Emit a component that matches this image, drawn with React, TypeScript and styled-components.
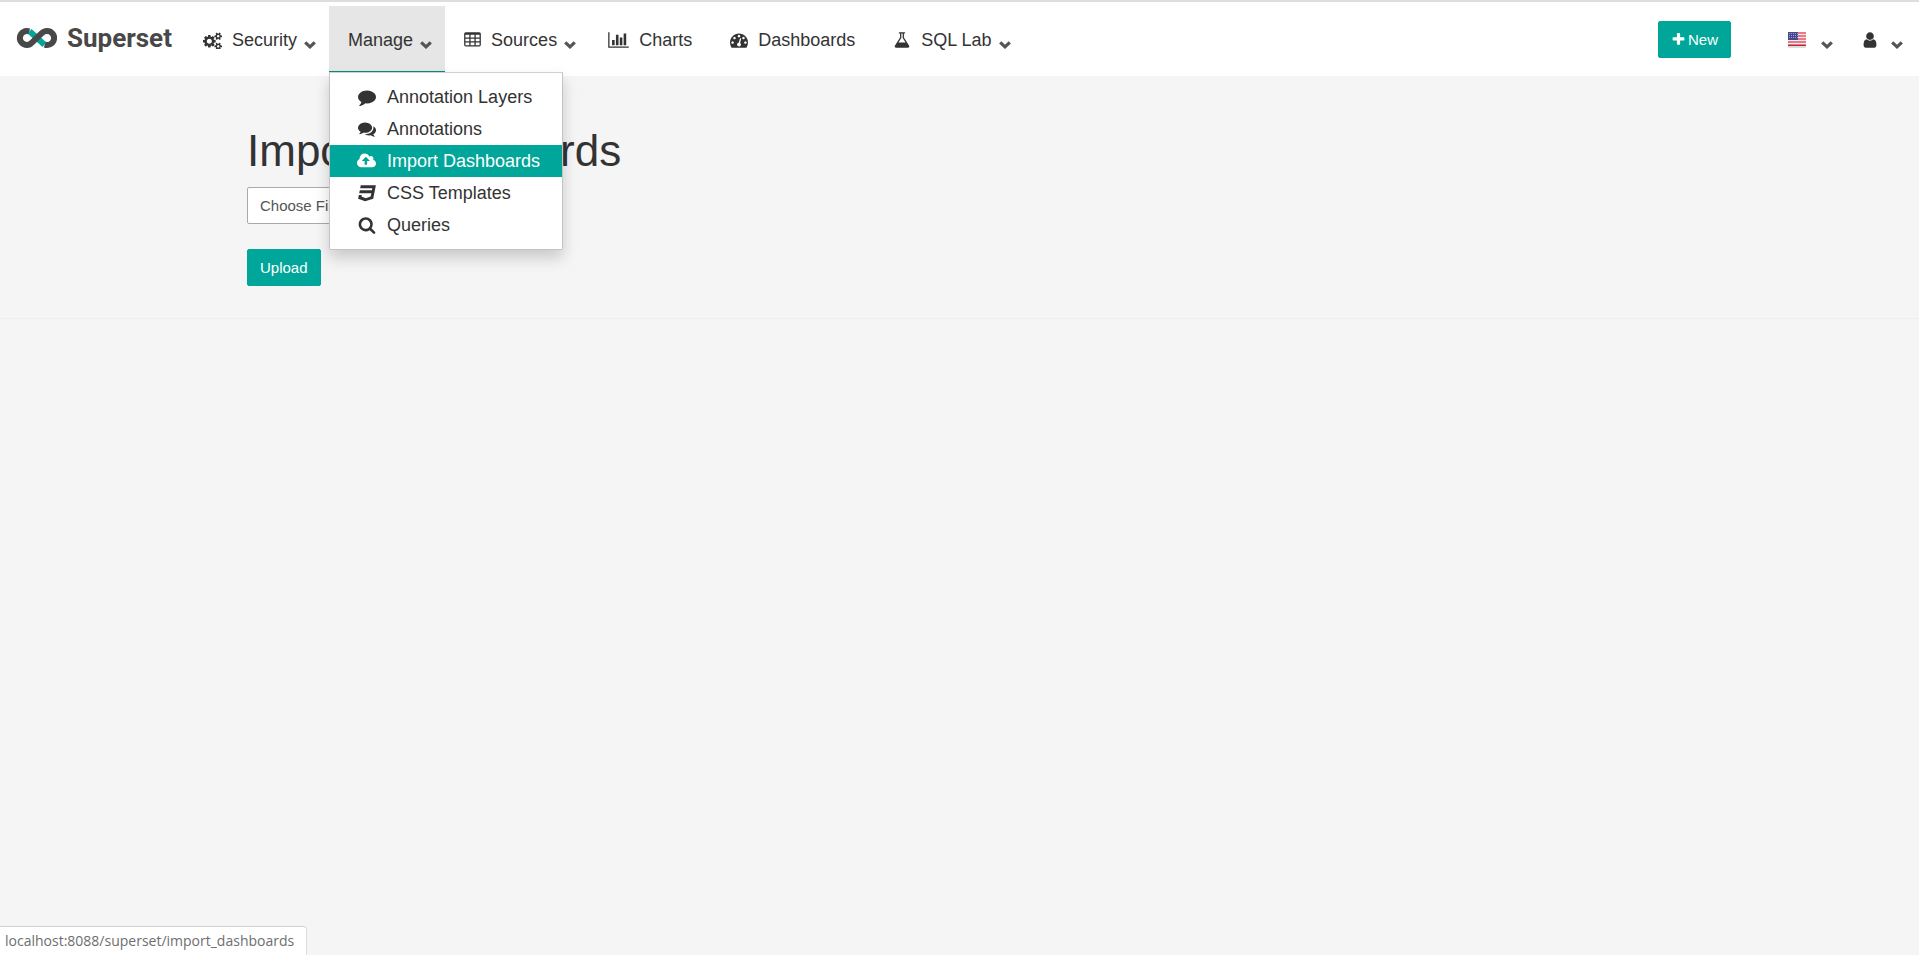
import React from 'react';
import styled, { createGlobalStyle } from 'styled-components';

const teal = '#00a699';
const ink = '#333';

const GlobalStyle = createGlobalStyle`
  *, *::before, *::after { box-sizing: border-box; }
  body {
    margin: 0;
    background: #f5f5f5;
    color: ${ink};
    font: 18px/26px "Liberation Sans", Arial, sans-serif;
  }
`;

type Glyph = { w: number; d: string };

const glyphs: Record<string, Glyph> = {
  cogs: { w: 1920, d: 'M896 1024q0-106-75-181t-181-75-181 75-75 181 75 181 181 75 181-75 75-181zm768 512q0-52-38-90t-90-38-90 38-38 90q0 53 37.5 90.5t90.5 37.5 90.5-37.5 37.5-90.5zm0-1024q0-52-38-90t-90-38-90 38-38 90q0 53 37.5 90.5t90.5 37.5 90.5-37.5 37.5-90.5zm-384 421v185q0 10-7 19.5t-16 10.5l-155 24q-11 35-32 76 34 48 90 115 7 11 7 20 0 12-7 19-23 30-82.5 89.5t-78.5 59.5q-11 0-21-7l-115-90q-37 19-77 31-11 108-23 155-7 24-30 24h-186q-11 0-20-7.5t-10-17.5l-23-153q-34-10-75-31l-118 89q-7 7-20 7-11 0-21-8-144-133-144-160 0-9 7-19 10-14 41-53t47-61q-23-44-35-82l-152-24q-10-1-17-9.5t-7-19.5v-185q0-10 7-19.5t16-10.5l155-24q11-35 32-76-34-48-90-115-7-11-7-20 0-12 7-20 22-30 82-89t79-59q11 0 21 7l115 90q34-18 77-32 11-108 23-154 7-24 30-24h186q11 0 20 7.5t10 17.5l23 153q34 10 75 31l118-89q8-7 20-7 11 0 21 8 144 133 144 160 0 8-7 19-12 16-42 54t-45 60q23 48 34 82l152 23q10 2 17 10.5t7 19.5zm640 533v140q0 16-149 31-12 27-30 52 51 113 51 138 0 4-4 7-122 71-124 71-8 0-46-47t-52-68q-20 2-30 2t-30-2q-14 21-52 68t-46 47q-2 0-124-71-4-3-4-7 0-25 51-138-18-25-30-52-149-15-149-31v-140q0-16 149-31 13-29 30-52-51-113-51-138 0-4 4-7 4-2 35-20t59-34 30-16q8 0 46 46.5t52 67.5q20-2 30-2t30 2q51-71 92-112l6-2q4 0 124 70 4 3 4 7 0 25-51 138 17 23 30 52 149 15 149 31zm0-1024v140q0 16-149 31-12 27-30 52 51 113 51 138 0 4-4 7-122 71-124 71-8 0-46-47t-52-68q-20 2-30 2t-30-2q-14 21-52 68t-46 47q-2 0-124-71-4-3-4-7 0-25 51-138-18-25-30-52-149-15-149-31v-140q0-16 149-31 13-29 30-52-51-113-51-138 0-4 4-7 4-2 35-20t59-34 30-16q8 0 46 46.5t52 67.5q20-2 30-2t30 2q51-71 92-112l6-2q4 0 124 70 4 3 4 7 0 25-51 138 17 23 30 52 149 15 149 31z' },
  table: { w: 1664, d: 'M160 128h1344q66 0 113 47t47 113v1088q0 66-47 113t-113 47h-1344q-66 0-113-47t-47-113v-1088q0-66 47-113t113-47zM128 384v256h384v-256zM640 384v256h384v-256zM1152 384v256h384v-256zM128 768v256h384v-256zM640 768v256h384v-256zM1152 768v256h384v-256zM128 1152v256h384v-256zM640 1152v256h384v-256zM1152 1152v256h384v-256z' },
  chart: { w: 2048, d: 'M640 896v512h-256v-512h256zm384-512v1024h-256v-1024h256zm1024 1152v128h-2048v-1536h128v1408h1920zm-640-896v768h-256v-768h256zm384-384v1152h-256v-1152h256z' },
  gauge: { w: 1792, d: 'M384 1152q0-53-37.5-90.5t-90.5-37.5-90.5 37.5-37.5 90.5 37.5 90.5 90.5 37.5 90.5-37.5 37.5-90.5zm192-448q0-53-37.5-90.5t-90.5-37.5-90.5 37.5-37.5 90.5 37.5 90.5 90.5 37.5 90.5-37.5 37.5-90.5zm428 481l101-382q6-26-7.5-48.5t-38.5-29.5-48 6.5-30 39.5l-101 382q-60 5-107 43.5t-63 98.5q-20 77 20 146t117 89 146-20 89-117q16-60-6-117t-72-91zm660-33q0-53-37.5-90.5t-90.5-37.5-90.5 37.5-37.5 90.5 37.5 90.5 90.5 37.5 90.5-37.5 37.5-90.5zm-640-640q0-53-37.5-90.5t-90.5-37.5-90.5 37.5-37.5 90.5 37.5 90.5 90.5 37.5 90.5-37.5 37.5-90.5zm448 192q0-53-37.5-90.5t-90.5-37.5-90.5 37.5-37.5 90.5 37.5 90.5 90.5 37.5 90.5-37.5 37.5-90.5zm320 448q0 261-141 483-19 29-54 29h-1402q-35 0-54-29-141-221-141-483 0-182 71-348t191-286 286-191 348-71 348 71 286 191 191 286 71 348z' },
  flask: { w: 1792, d: 'M1591 1448q56 89 21.5 152.5t-140.5 63.5h-1152q-106 0-140.5-63.5t21.5-152.5l503-793v-399h-64q-26 0-45-19t-19-45 19-45 45-19h512q26 0 45 19t19 45-19 45-45 19h-64v399zm-779-725l-272 429h712l-272-429-20-31v-436h-128v436z' },
  comment: { w: 1792, d: 'M1792 896q0 174-120 321.5t-326 233-450 85.5q-70 0-145-8-198 175-460 242-49 14-114 22-17 2-30.5-9t-17.5-29v-1q-3-4-.5-12t2-10 4.5-9.5l6-9 7-8.5 8-9q7-8 31-34.5t34.5-38 31-39.5 32.5-51 27-59 26-76q-157-89-247.5-220t-90.5-281q0-130 71-248.5t191-204.5 286-136.5 348-50.5q244 0 450 85.5t326 233 120 321.5z' },
  comments: { w: 1792, d: 'M1408 768q0 139-94 257t-256.5 186.5-353.5 68.5q-86 0-176-16-124 88-278 128-36 9-86 16h-3q-11 0-20.5-8t-11.5-21q-1-3-1-6.5t.5-6.5 2-6l2.5-5 3.5-5.5 4-5 4.5-5 4-4.5q5-6 23-25t26-29.5 22.5-29 25-38.5 20.5-44q-124-72-195-177t-71-224q0-139 94-257t256.5-186.5 353.5-68.5 353.5 68.5 256.5 186.5 94 257zm384 256q0 120-71 224.5t-195 176.5q10 24 20.5 44t25 38.5 22.5 29 26 29.5 23 25q1 1 4 4.5t4.5 5 4 5 3.5 5.5l2.5 5 2 6 .5 6.5-1 6.5q-3 14-13 22t-22 7q-50-7-86-16-154-40-278-128-90 16-176 16-271 0-472-132 58 4 88 4 161 0 309-45t264-129q125-92 192-212t67-254q0-77-23-152 129 71 204 178t75 230z' },
  upload: { w: 1920, d: 'M1280 864q0-14-9-23l-352-352q-9-9-23-9t-23 9l-351 351q-10 12-10 24 0 14 9 23t23 9h224v352q0 13 9.5 22.5t22.5 9.5h192q13 0 22.5-9.5t9.5-22.5v-352h224q13 0 22.5-9.5t9.5-22.5zm640 288q0 159-112.5 271.5t-271.5 112.5h-1088q-185 0-316.5-131.5t-131.5-316.5q0-130 70-240t188-165q-2-30-2-43 0-212 150-362t362-150q156 0 285.5 87t188.5 231q71-62 166-62 106 0 181 75t75 181q0 76-41 138 130 31 213.5 135.5t83.5 238.5z' },
  css: { w: 1792, d: 'M275 128h1505l-266 1333-804 267-698-267 71-356h297l-29 147 422 161 486-161 68-339h-1208l58-297h1209l38-191h-1208z' },
  search: { w: 1792, d: 'M1216 832q0-185-131.5-316.5t-316.5-131.5-316.5 131.5-131.5 316.5 131.5 316.5 316.5 131.5 316.5-131.5 131.5-316.5zm512 832q0 52-38 90t-90 38q-54 0-90-38l-343-342q-179 124-399 124-143 0-273.5-55.5t-225-150-150-225-55.5-273.5 55.5-273.5 150-225 225-150 273.5-55.5 273.5 55.5 225 150 150 225 55.5 273.5q0 220-124 399l343 343q37 37 37 90z' },
  plus: { w: 1792, d: 'M1600 736v192q0 40-28 68t-68 28h-416v416q0 40-28 68t-68 28h-192q-40 0-68-28t-28-68v-416h-416q-40 0-68-28t-28-68v-192q0-40 28-68t68-28h416v-416q0-40 28-68t68-28h192q40 0 68 28t28 68v416h416q40 0 68 28t28 68z' },
  user: { w: 1792, d: 'M1536 1399q0 109-62.5 187t-150.5 78h-854q-88 0-150.5-78t-62.5-187q0-85 8.5-160.5t31.5-152 58.5-131 94-89 134.5-34.5q131 128 313 128t313-128q76 0 134.5 34.5t94 89 58.5 131 31.5 152 8.5 160.5zm-256-887q0 159-112.5 271.5t-271.5 112.5-271.5-112.5-112.5-271.5 112.5-271.5 271.5-112.5 271.5 112.5 112.5 271.5z' },
};

function Icon({ name, size = 18 }: { name: string; size?: number }) {
  const g = glyphs[name];
  return (
    <svg width={Math.round((g.w / 1792) * size)} height={size} viewBox={`0 0 ${g.w} 1792`} aria-hidden="true">
      <path d={g.d} fill="currentColor" fillRule={name === 'table' ? 'evenodd' : 'nonzero'} />
    </svg>
  );
}

const CaretBox = styled.svg`
  width: 12px;
  height: 8px;
  margin-top: 9px;
  flex: none;
`;

const Caret = () => (
  <CaretBox viewBox="0 0 12 8" aria-hidden="true">
    <path d="M1.2 1.3 6 5.8l4.8-4.5" fill="none" stroke="#555" strokeWidth="3.2" />
  </CaretBox>
);

const Header = styled.header`
  display: flex;
  height: 76px;
  padding: 4px 3px 4px 16px;
  border-top: 2px solid #dcdce1;
  background: #fff;
`;

const Brand = styled.a`
  display: flex;
  align-items: center;
  gap: 9px;
  width: 168px;
  height: 63px;
  color: #484848;
  font: bold 26px/30px Roboto, sans-serif;
  text-decoration: none;
`;

const NavList = styled.ul`
  display: flex;
  flex: 1;
  margin: 0;
  padding: 0;
  list-style: none;
`;

const NavItem = styled.li`
  position: relative;
`;

const NavLink = styled.a<{ $caret?: boolean; $open?: boolean }>`
  display: flex;
  align-items: center;
  gap: 10px;
  height: 67px;
  padding: 2px ${p => (p.$caret ? 13 : 19)}px 0 19px;
  border-bottom: 1px solid ${p => (p.$open ? '#008a80' : 'transparent')};
  background: ${p => (p.$open ? '#e6e6e6' : 'transparent')};
  color: ${ink};
  text-decoration: none;
  white-space: nowrap;

  ${CaretBox} { margin-left: -3px; }
`;

const ToolLink = styled(NavLink)`
  padding-left: 15px;
  gap: 12px;

  ${CaretBox} { margin-left: 0; }
`;

const Menu = styled.ul`
  position: absolute;
  z-index: 2;
  top: 66px;
  left: 0;
  width: 234px;
  margin: 0;
  padding: 8px 0;
  border: 1px solid #c4c4c4;
  border-top-color: #d0d0d0;
  border-radius: 0 0 2px 2px;
  background: #fff;
  box-shadow: 0 8px 15px rgba(0, 0, 0, 0.18);
  list-style: none;
`;

const MenuEdge = styled.span`
  position: absolute;
  z-index: 3;
  right: 0;
  bottom: 0;
  left: 0;
  height: 1px;
  background: #008a80;
`;

const MenuLink = styled.a<{ $active?: boolean }>`
  display: flex;
  align-items: center;
  gap: 9px;
  height: 32px;
  padding: 0 0 1px 25px;
  background: ${p => (p.$active ? teal : 'transparent')};
  color: ${p => (p.$active ? '#fff' : ink)};
  text-decoration: none;
  white-space: nowrap;
`;

const MenuIcon = styled.span`
  display: flex;
  justify-content: center;
  width: 23px;
`;

const Tools = styled.div`
  display: flex;
  align-items: flex-start;
`;

const Button = styled.button`
  display: inline-flex;
  align-items: center;
  gap: 2px;
  height: 37px;
  padding: 0 12px;
  border: 1px solid ${teal};
  border-radius: 2px;
  background: ${teal};
  color: #fff;
  font: 15px/22px "Liberation Sans", Arial, sans-serif;
`;

const NewButton = styled(Button)`
  margin: 15px 42px 0 0;
`;

const Page = styled.main`
  padding: 49px 0 32px;
  border-bottom: 1px solid #eee;
`;

const Container = styled.form`
  width: 100%;
  max-width: 1455px;
  margin: 0 auto;
  padding: 0 15px;
`;

const Title = styled.h1`
  margin: 0 0 10px;
  font-size: 44px;
  font-weight: 400;
  line-height: 52px;
`;

const FilePicker = styled.label`
  display: flex;
  align-items: center;
  width: 120px;
  height: 37px;
  margin-bottom: 25px;
  padding: 0 12px;
  border: 1px solid #aaa;
  border-radius: 2px;
  background: #fff;
  color: #555;
  font-size: 15px;
`;

const HiddenFile = styled.input`
  position: absolute;
  width: 1px;
  height: 1px;
  opacity: 0;
`;

const Status = styled.div`
  position: fixed;
  bottom: 0;
  left: 0;
  height: 29px;
  padding: 0 12px 0 5px;
  border-top: 1px solid #d0d0d0;
  border-right: 1px solid #dcdcdc;
  border-top-right-radius: 4px;
  background: #fff;
  color: #6e6e6e;
  font: 14px/28px "Open Sans", sans-serif;
`;

const Logo = () => (
  <svg width="42" height="22" viewBox="0 0 42 22" aria-hidden="true">
    <g fill="none" strokeWidth="6">
      <path d="M13.500 4.300 28.500 17.700" stroke={teal} />
      <path
        d="M13.200 4.400A7 7 0 1 0 11 18C13 18 14.500 17.200 16 15.500L25.500 6.500C27 4.800 28.900 4 31 4A7 7 0 1 1 28.800 17.600"
        stroke="#484848"
      />
    </g>
  </svg>
);

const Flag = () => (
  <svg width="21" height="16" viewBox="0 0 21 16" role="img" aria-label="English">
    <rect width="18" height="15" y="1" rx="1" fill="#ddd" />
    <rect width="18" height="14" fill="#f6e9ea" />
    <path d="M0 1h18M0 4h18M0 7h18M0 10h18M0 13h18" stroke="#e0566a" strokeWidth="1.600" />
    <path d="M0 13.500h18" stroke="#b8283c" />
    <rect width="10" height="8" fill="#46488f" />
    <path d="M1 1.500h9M1 3.500h9M1 5.500h9" stroke="#9b9cc8" strokeWidth="1" strokeDasharray="1 1" />
  </svg>
);

const menuItems = [
  { icon: 'comment', label: 'Annotation Layers' },
  { icon: 'comments', label: 'Annotations' },
  { icon: 'upload', label: 'Import Dashboards', active: true },
  { icon: 'css', label: 'CSS Templates' },
  { icon: 'search', label: 'Queries' },
];

const navItems = [
  { icon: 'cogs', label: 'Security', caret: true },
  { label: 'Manage', caret: true, open: true },
  { icon: 'table', label: 'Sources', caret: true },
  { icon: 'chart', label: 'Charts' },
  { icon: 'gauge', label: 'Dashboards' },
  { icon: 'flask', label: 'SQL Lab', caret: true },
];

export default function App() {
  return (
    <>
      <GlobalStyle />
      <Header>
        <Brand href="#">
          <Logo />
          Superset
        </Brand>
        <NavList>
          {navItems.map(item => (
            <NavItem key={item.label}>
              <NavLink href="#" $caret={item.caret} $open={item.open}>
                {item.icon && <Icon name={item.icon} />}
                {item.label}
                {item.caret && <Caret />}
              </NavLink>
              {item.open && (
                <>
                  <Menu>
                    {menuItems.map(entry => (
                      <li key={entry.label}>
                        <MenuLink href="#" $active={entry.active}>
                          <MenuIcon><Icon name={entry.icon} /></MenuIcon>
                          {entry.label}
                        </MenuLink>
                      </li>
                    ))}
                  </Menu>
                  <MenuEdge />
                </>
              )}
            </NavItem>
          ))}
        </NavList>
        <Tools>
          <NewButton type="button">
            <Icon name="plus" size={15} />
            New
          </NewButton>
          <ToolLink href="#" $caret aria-label="Language">
            <Flag />
            <Caret />
          </ToolLink>
          <ToolLink href="#" $caret aria-label="Account">
            <Icon name="user" />
            <Caret />
          </ToolLink>
        </Tools>
      </Header>
      <Page>
        <Container onSubmit={e => e.preventDefault()}>
          <Title>Import Dashboards</Title>
          <FilePicker>
            Choose File
            <HiddenFile type="file" />
          </FilePicker>
          <Button type="submit">Upload</Button>
        </Container>
      </Page>
      <Status>localhost:8088/superset/import_dashboards</Status>
    </>
  );
}
